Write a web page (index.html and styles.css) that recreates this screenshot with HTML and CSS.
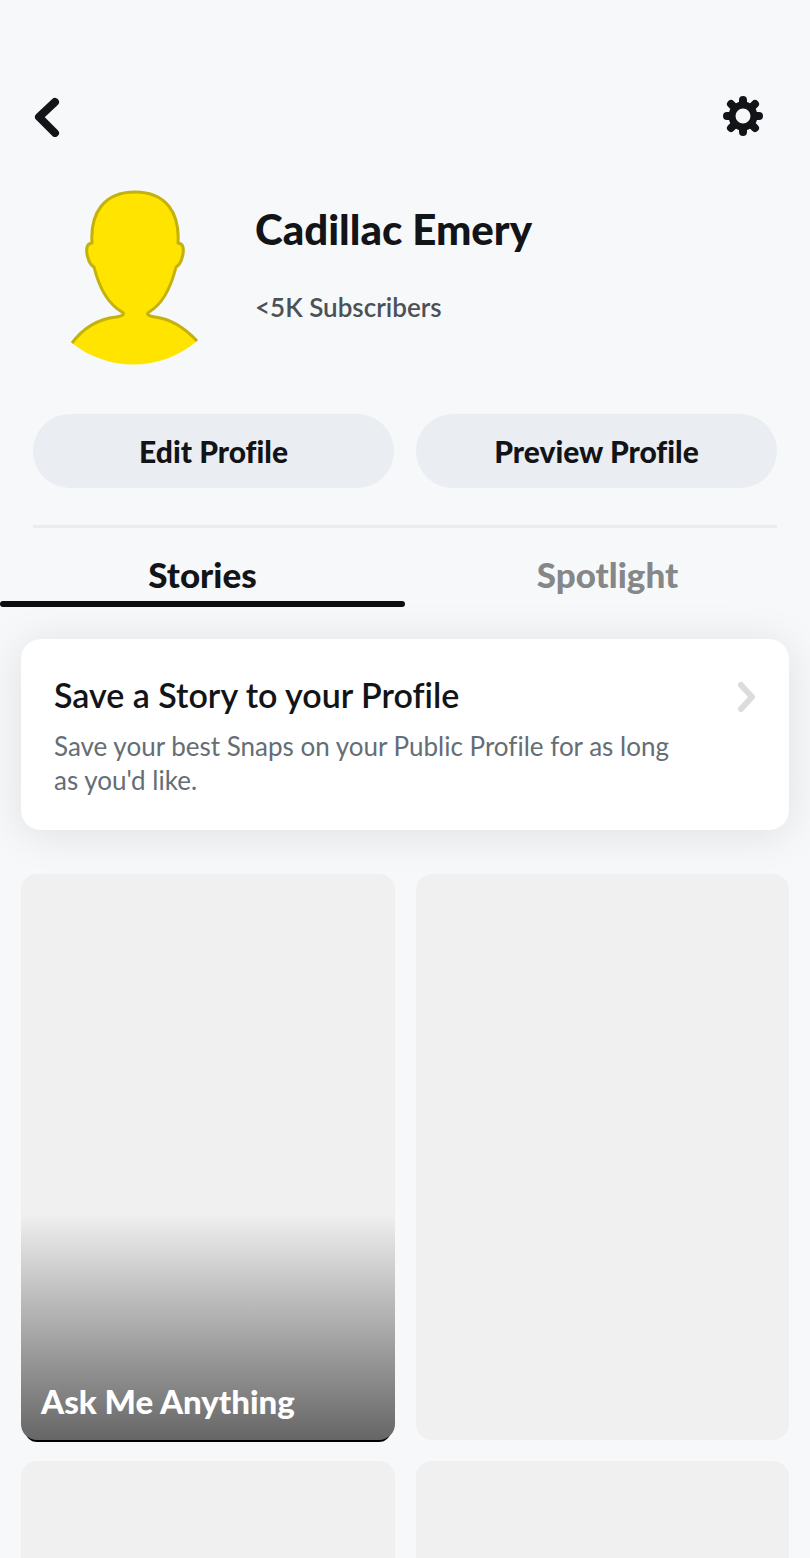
FILE: index.html
```
<!DOCTYPE html>
<html lang="en">
<head>
    <meta charset="UTF-8">
    <meta name="viewport" content="width=device-width, initial-scale=1.0">
    <title>Public Profile</title>
    <link rel="stylesheet" href="styles.css">
</head>
<body>
    <div class="screen">
        <header class="top-bar">
            <button class="icon-btn" aria-label="Back">
                <svg width="26" height="42" viewBox="0 0 26 42" fill="none" stroke="#121417" stroke-width="8" stroke-linecap="round" stroke-linejoin="round">
                    <path d="M21 7 L5 22 L21 38"/>
                </svg>
            </button>
            <button class="icon-btn" aria-label="Settings">
                <svg width="42" height="42" viewBox="-21 -21 42 42" fill="none" stroke="#121417">
                    <g stroke-width="8" stroke-linecap="round" stroke-linejoin="round">
                        <path d="M0 -16 V-12 M0 16 V12 M-16 0 H-12 M16 0 H12"/>
                        <path d="M-12 -12 L-9 -9 M12 12 L9 9 M-12 12 L-9 9 M12 -12 L9 -9"/>
                    </g>
                    <circle r="11" stroke-width="7"/>
                </svg>
            </button>
        </header>

        <section class="profile">
            <svg class="avatar" width="130" height="178" viewBox="0 0 130 178" role="img" aria-label="Avatar">
                <path fill="#ffe400" d="M2 155 C14 139 28 131 46 129 C53 128 55 126 52 124 C38 116 29 99 24 79 C18 76 14 60 19 56 L22 55 C20 25 34 4 65 4 C96 4 110 25 108 55 L111 56 C116 60 112 76 106 79 C101 99 93 116 79 124 C76 126 78 128 85 129 C101 131 114 139 127 153 C91 184 38 184 2 155 Z"/>
                <path fill="none" stroke="#c3b10d" stroke-width="3" stroke-linejoin="round" d="M2 155 C14 139 28 131 46 129 C53 128 55 126 52 124 C38 116 29 99 24 79 C18 76 14 60 19 56 L22 55 C20 25 34 4 65 4 C96 4 110 25 108 55 L111 56 C116 60 112 76 106 79 C101 99 93 116 79 124 C76 126 78 128 85 129 C101 131 114 139 127 153"/>
            </svg>
            <div class="profile-info">
                <h1>Cadillac Emery</h1>
                <p>&lt;5K Subscribers</p>
            </div>
        </section>

        <div class="actions">
            <button class="pill-btn">Edit Profile</button>
            <button class="pill-btn">Preview Profile</button>
        </div>

        <nav class="tabs" role="tablist">
            <button class="tab active" role="tab" aria-selected="true">Stories</button>
            <button class="tab" role="tab" aria-selected="false">Spotlight</button>
        </nav>

        <main class="content">
            <a class="save-card" href="#">
                <div class="save-text">
                    <h2>Save a Story to your Profile</h2>
                    <p>Save your best Snaps on your Public Profile for as long as you'd like.</p>
                </div>
                <svg class="chevron" width="20" height="32" viewBox="0 0 20 32" fill="none" stroke="#dcdcdc" stroke-width="6" stroke-linecap="round" stroke-linejoin="round">
                    <path d="M4 4 L15 16 L4 28"/>
                </svg>
            </a>

            <div class="story-grid">
                <a class="story story-named" href="#"><span>Ask Me Anything</span></a>
                <div class="story"></div>
                <div class="story"></div>
                <div class="story"></div>
            </div>
        </main>
    </div>
</body>
</html>
```
FILE: styles.css
```
* {
    box-sizing: border-box;
    margin: 0;
    padding: 0;
}

body {
    background-color: #f7f8fa;
    color: #121417;
    font-family: Lato, "Open Sans", sans-serif;
    font-variant-ligatures: none;
}

button {
    border: none;
    background: none;
    color: inherit;
    font-family: inherit;
    font-variant-ligatures: inherit;
    cursor: pointer;
}

a {
    color: inherit;
    text-decoration: none;
}

.screen {
    height: 100vh;
    overflow: hidden;
}

.top-bar {
    display: flex;
    justify-content: space-between;
    align-items: center;
    padding: 95px 46px 0 34px;
}

.icon-btn svg {
    display: block;
}

/* Profile */
.profile {
    display: flex;
    gap: 55px;
    padding: 51px 33px 0 70px;
}

.avatar {
    flex-shrink: 0;
}

.profile-info {
    padding-top: 17px;
}

.profile-info h1 {
    font-size: 42px;
    font-weight: 900;
    line-height: 48px;
}

.profile-info p {
    margin-top: 38px;
    font-size: 26px;
    font-weight: 600;
    line-height: 32px;
    color: #4b5157;
}

.actions {
    display: flex;
    gap: 22px;
    margin: 0 33px;
    padding: 48px 0 37px;
    border-bottom: 3px solid #e9ebed;
}

.pill-btn {
    flex: 1;
    height: 74px;
    border-radius: 37px;
    background-color: #eaedf1;
    font-size: 30px;
    font-weight: 900;
}

/* Tabs */
.tabs {
    display: flex;
}

.tab {
    flex: 1;
    height: 79px;
    padding-top: 19px;
    font-size: 35px;
    font-weight: 900;
    line-height: 54px;
    color: #858789;
    display: flex;
    flex-direction: column;
    align-items: center;
}

.tab::after {
    content: "";
    width: 100%;
    height: 6px;
    margin-top: auto;
    border-radius: 3px;
}

.tab.active {
    color: #121417;
}

.tab.active::after {
    background-color: #0d0e10;
}

/* Stories */
.content {
    padding: 32px 21px 0;
}

.save-card {
    display: flex;
    justify-content: space-between;
    padding: 35px 32px 33px 33px;
    border-radius: 20px;
    background-color: #fff;
    box-shadow: 0 4px 44px rgba(0, 0, 0, 0.1);
}

.save-text {
    max-width: 630px;
}

.save-text h2 {
    font-size: 34px;
    font-weight: 600;
    line-height: 42px;
}

.save-text p {
    margin-top: 13px;
    font-size: 26px;
    line-height: 34px;
    color: #656d75;
}

.chevron {
    flex-shrink: 0;
    margin-top: 7px;
}

.story-grid {
    display: grid;
    grid-template-columns: 1fr 1fr;
    gap: 21px;
    margin-top: 44px;
}

.story {
    aspect-ratio: 374 / 567;
    border-radius: 16px;
    background-color: #f0f0f0;
}

.story-named {
    display: flex;
    align-items: flex-end;
    padding: 0 20px 19px;
    box-shadow: 0 6px 0 -4px #000;
    background-image: linear-gradient(#f0f0f0 60%, #666 100%);
    color: #fff;
    font-size: 33px;
    font-weight: 900;
    line-height: 40px;
}
```
